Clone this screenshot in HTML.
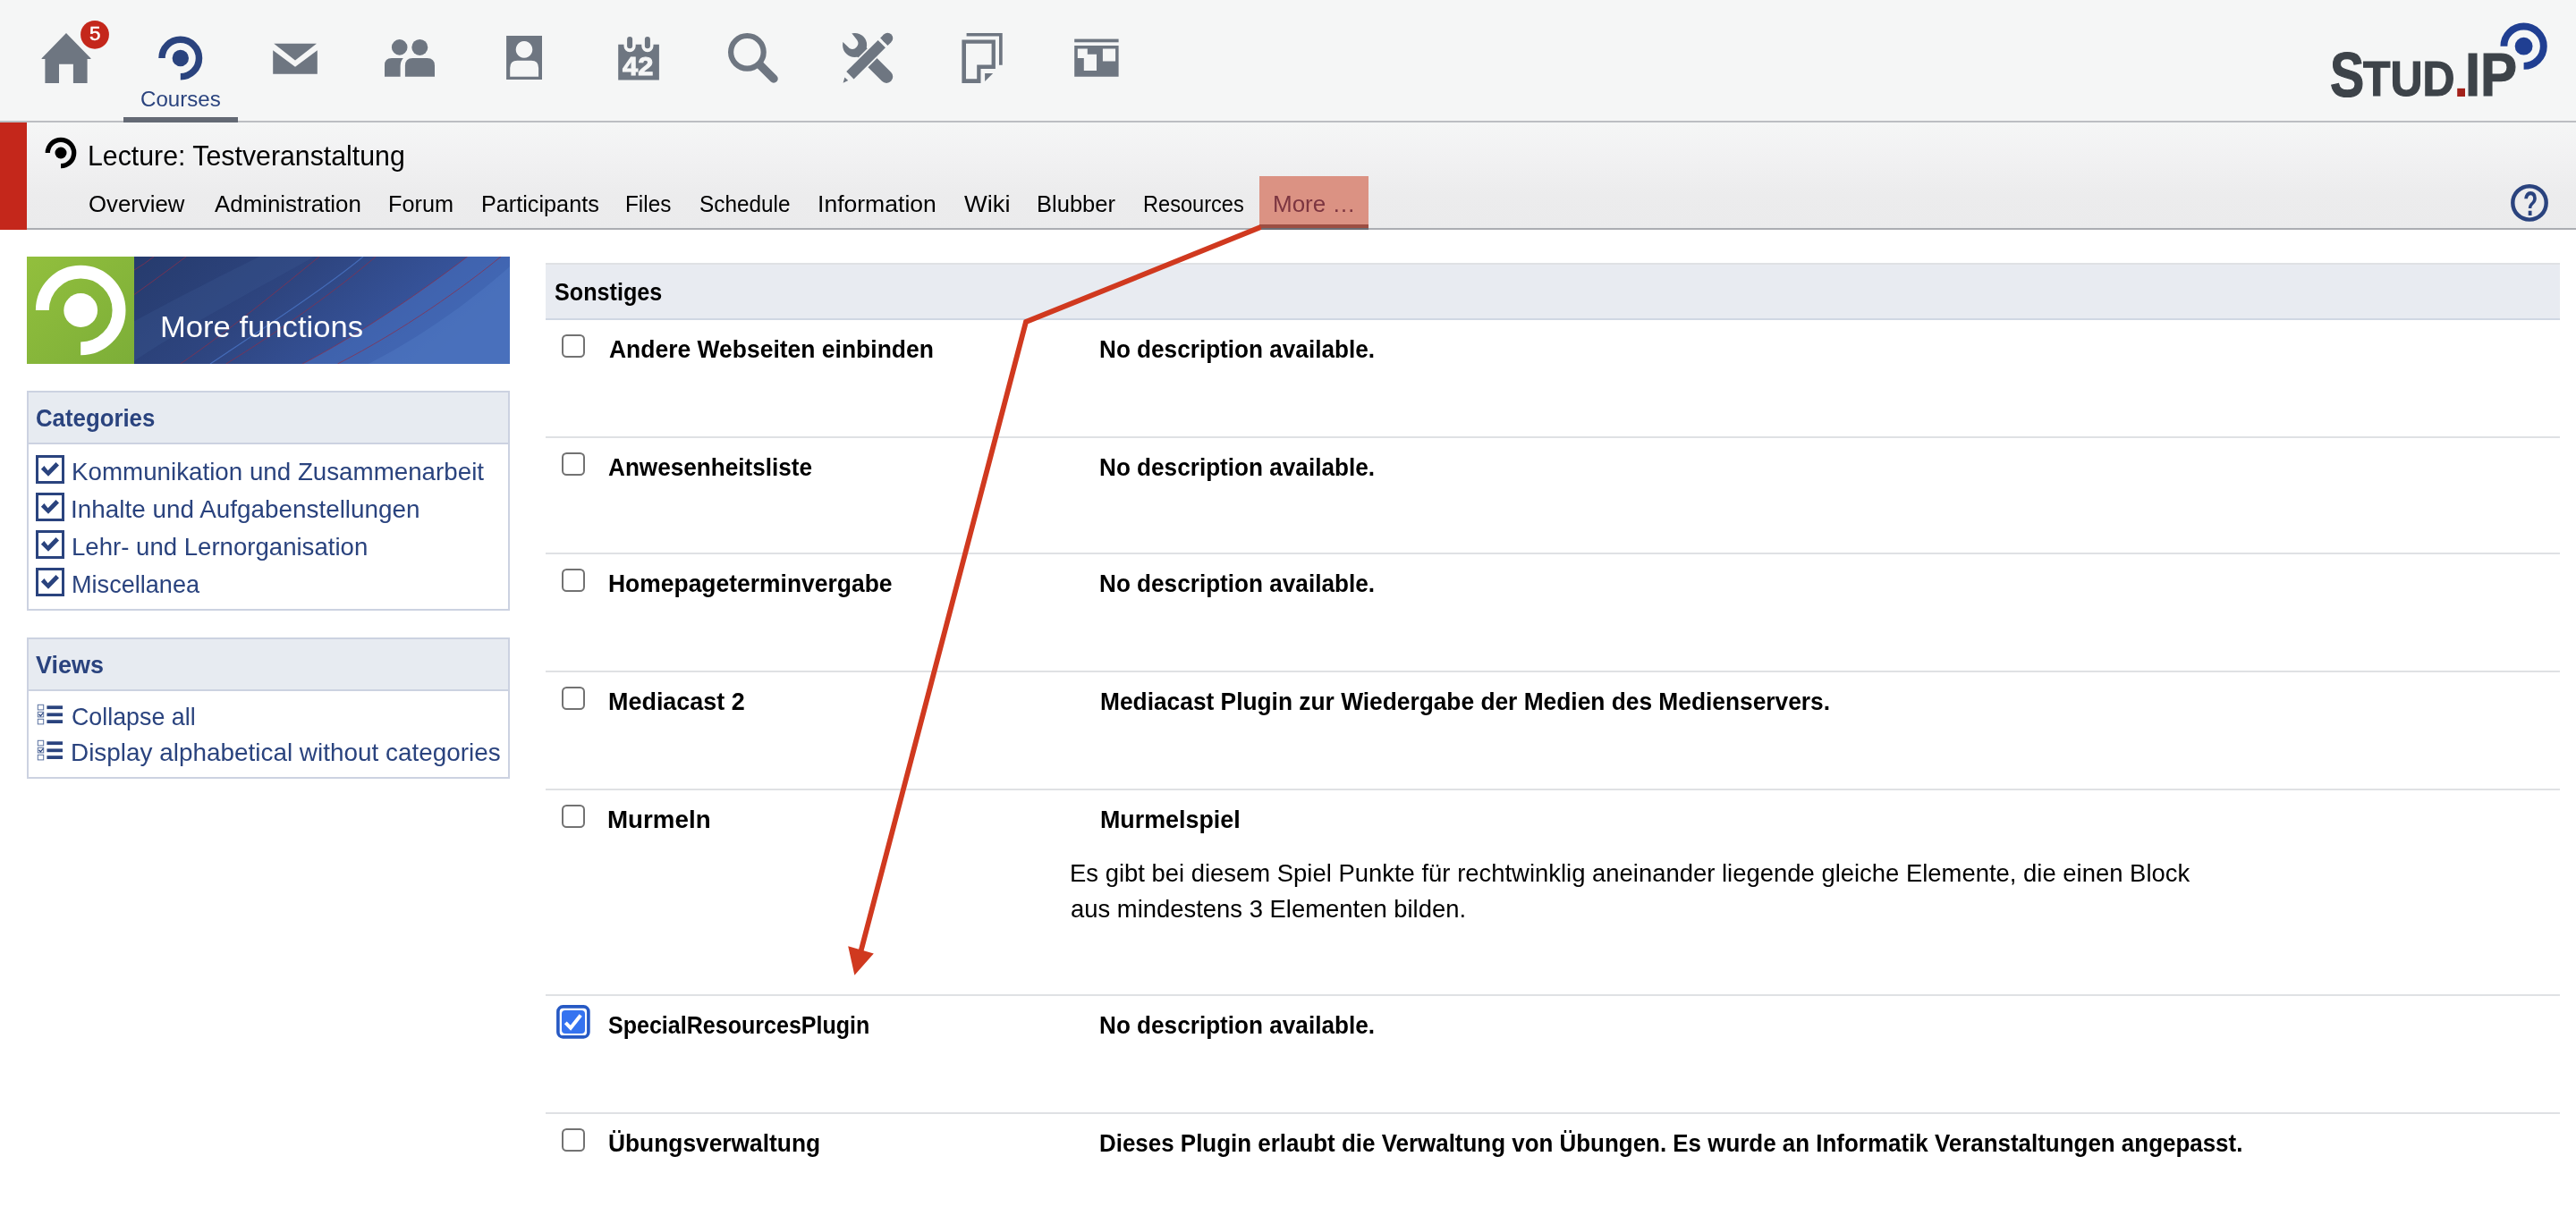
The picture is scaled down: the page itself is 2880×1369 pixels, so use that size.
<!DOCTYPE html>
<html lang="en">
<head>
<meta charset="utf-8">
<title>More functions - Lecture: Testveranstaltung - Stud.IP</title>
<style>
html,body{margin:0;padding:0;}
body{width:2880px;height:1369px;position:relative;overflow:hidden;background:#fff;
  font-family:"Liberation Sans",sans-serif;}
.a{position:absolute;display:block;}
.t{position:absolute;display:inline-block;white-space:nowrap;transform-origin:0 0;margin:0;padding:0;font-weight:400;font-style:normal;text-decoration:none;}
#topbar{left:0;top:0;width:2880px;height:135px;background:#f5f6f6;}
#topline{left:0;top:135px;width:2880px;height:2px;background:#bcbec2;}
#navactive{left:138px;top:131px;width:128px;height:6px;background:#646a75;}
#bar2{left:0;top:137px;width:2880px;height:118px;background:linear-gradient(#f5f6f6 0%,#f1f1f2 35%,#ececed 68%,#ebebec 100%);}
#bar2line{left:0;top:255px;width:2880px;height:2px;background:#abadb2;}
#redstrip{left:0;top:137px;width:30px;height:120px;background:#c4271b;}
#moretab{left:1408px;top:197px;width:122px;height:54px;background:#db9283;}
#moretabline{left:1408px;top:251px;width:122px;height:4px;background:#9c4e42;}
#moretabline2{left:1408px;top:255px;width:122px;height:2px;background:#6b6d75;}
svg{position:absolute;overflow:visible;}
/* sidebar */
#banner{left:30px;top:287px;width:540px;height:120px;background:#2d447f;}
.widget{box-sizing:border-box;border:2px solid #ccd2e1;background:#fff;}
.whead{box-sizing:border-box;left:0;top:0;width:100%;border-bottom:2px solid #ccd2e1;background:#e7ebf1;}
.cb{box-sizing:border-box;width:32px;height:32px;border:4px solid #2a437e;background:#fff;}
/* table */
#thead{left:610px;top:294px;width:2252px;height:62px;background:#e8ebf1;box-sizing:border-box;border-top:2px solid #dfe1e4;}
#theadline{left:610px;top:356px;width:2252px;height:2px;background:#d0d7e3;}
.sep{left:610px;width:2252px;height:2px;background:#dfe1e4;}
.chk{box-sizing:border-box;left:628px;width:26px;height:26px;border:2px solid #727272;border-radius:5.5px;background:#fff;}
#texts{position:absolute;left:0;top:0;width:2880px;height:1369px;will-change:transform;}

</style>
</head>
<body>
<div class="a" id="topbar"></div>
<div class="a" id="topline"></div>
<div class="a" id="navactive"></div>
<div class="a" id="bar2"></div>
<div class="a" id="bar2line"></div>
<div class="a" id="redstrip"></div>
<div class="a" id="moretab"></div>
<div class="a" id="moretabline"></div>
<div class="a" id="moretabline2"></div>

<!-- ICONS -->
<svg id="icons" width="2880" height="270" style="left:0;top:0" viewBox="0 0 2880 270">
  <g fill="#6e7681">
    <!-- home -->
    <path d="M74 37.1 L101.5 65.3 L101.5 66.1 L97.6 66.1 L97.6 93 L81.9 93 L81.9 71.7 L66 71.7 L66 93 L50.4 93 L50.4 66.1 L46.6 66.1 L46.6 65.3 Z"/>
    <!-- mail -->
    <path d="M306.2 48.8 L354 48.8 L330 67.6 Z"/>
    <path d="M305.2 56.2 L330 74.8 L354.8 56.2 L354.8 82.7 L305.2 82.7 Z"/>
    <!-- people -->
    <circle cx="446.7" cy="52.9" r="8.8"/>
    <circle cx="469.3" cy="52.9" r="9"/>
    <path d="M430 85.8 L430 73 Q430 65 438 65 L450.8 65 Q447.6 68.5 447.6 74 L447.6 85.8 Z"/>
    <path d="M452.9 85.8 L452.9 73.5 Q452.9 65 461.4 65 L477.5 65 Q486 65 486 73.5 L486 85.8 Z"/>
    <!-- profile -->
    <path fill-rule="evenodd" d="M566.1 39.9 H606 V88.9 H566.1 Z M586 46.1 a9.3 9.3 0 1 0 0.01 0 Z M570.2 85.8 V76 Q570.2 67.8 578.4 67.8 H594 Q602.1 67.8 602.1 76 V85.8 Z"/>
    <!-- calendar -->
    <path fill-rule="evenodd" d="M691.2 49.8 H697.5 V51.6 a6.6 6.6 0 0 0 13.2 0 V49.8 H717.3 V51.6 a6.6 6.6 0 0 0 13.2 0 V49.8 H736.9 V89.6 H691.2 Z"/>
    <rect x="701.1" y="40.9" width="6" height="13.4" rx="3"/>
    <rect x="720.9" y="40.9" width="6" height="13.4" rx="3"/>
    <!-- search -->
    <circle cx="835.4" cy="58.3" r="18.3" fill="none" stroke="#6e7681" stroke-width="6.2"/>
    <path d="M850 73 L865 88" fill="none" stroke="#6e7681" stroke-width="9.5" stroke-linecap="round"/>
  </g>
  <!-- tools -->
  <g id="tools">
    <path d="M955.6 50.4 L991.1 85.8" fill="none" stroke="#6e7681" stroke-width="14.3" stroke-linecap="round"/>
    <circle cx="955.6" cy="50.4" r="13.5" fill="#6e7681"/>
    <path d="M952.1 37.1 L958.2 44.8 A6.4 6.4 0 0 1 949.7 53.9 L942.4 47.1 L936 46 L938 32 L951 30 Z" fill="#f5f6f6"/>
    <path d="M944 90.7 L996 38.9" fill="none" stroke="#f5f6f6" stroke-width="15.4"/>
    <path d="M950.4 84.3 L985.8 49.1" fill="none" stroke="#6e7681" stroke-width="11.8"/>
    <path d="M988.3 46.7 L992.35 42.7" fill="none" stroke="#6e7681" stroke-width="11.8"/>
    <circle cx="992.35" cy="42.7" r="5.9" fill="#6e7681"/>
    <path d="M944.4 86.5 L948.2 90.1 L942.6 92.7 Z" fill="#6e7681"/>
  </g>
  <g fill="#6e7681">
    <!-- files -->
    <path d="M1080.6 37 H1120.7 V72.8 H1117 V40.6 H1080.6 Z"/>
    <path fill-rule="evenodd" d="M1075.4 44.5 H1112.9 V77.1 H1096.5 V92.9 H1075.4 Z M1080 48.8 V88.2 H1092.2 V72.5 H1108.6 V48.8 Z"/>
    <path d="M1101.1 82.1 H1110.2 L1101.1 91 Z"/>
    <!-- layout -->
    <rect x="1201.2" y="43.6" width="49.4" height="3.7"/>
    <path fill-rule="evenodd" d="M1201.2 51 H1250.6 V85.8 H1201.2 Z M1204.8 54.5 V65 H1211.8 V79 H1226 V60.7 H1215.8 V54.5 Z M1232.9 54.5 H1247.1 V68.4 H1232.9 Z"/>
  </g>
  <!-- badge -->
  <circle cx="106" cy="38.8" r="15.9" fill="#c4271b"/>
  <!-- courses icon -->
  <path d="M181 65 A20.75 20.75 0 1 1 201.8 85.75" fill="none" stroke="#2a437e" stroke-width="7.5"/>
  <circle cx="201.8" cy="65" r="9.2" fill="#2a437e"/>
  <!-- title icon -->
  <path d="M53.3 171 A14.7 14.7 0 1 1 68 185.7" fill="none" stroke="#000" stroke-width="5.3"/>
  <circle cx="68" cy="171" r="6.5" fill="#000"/>
  <!-- logo circle -->
  <path d="M2799.4 51.7 A22.2 22.2 0 1 1 2821.6 73.9" fill="none" stroke="#203f92" stroke-width="7.9"/>
  <circle cx="2821.6" cy="51.7" r="9.9" fill="#203f92"/>
  <!-- help -->
  <circle cx="2828" cy="226.9" r="18.7" fill="none" stroke="#2a437e" stroke-width="4.4"/>
</svg>

<!-- SIDEBAR -->
<div class="a" id="banner">
  <svg width="540" height="120" viewBox="0 0 540 120" style="left:0;top:0">
    <defs>
      <linearGradient id="bg1" x1="0" y1="0" x2="1" y2="0.35">
        <stop offset="0" stop-color="#263b6d"/>
        <stop offset="0.45" stop-color="#2e4580"/>
        <stop offset="0.8" stop-color="#36539a"/>
        <stop offset="1" stop-color="#3b5ca6"/>
      </linearGradient>
      <linearGradient id="gg" x1="0" y1="0" x2="1" y2="1">
        <stop offset="0" stop-color="#92bf3d"/>
        <stop offset="1" stop-color="#7cae38"/>
      </linearGradient>
      <clipPath id="bclip"><rect x="120" y="0" width="420" height="120"/></clipPath>
    </defs>
    <rect x="120" y="0" width="420" height="120" fill="url(#bg1)"/>
    <g clip-path="url(#bclip)"><g transform="translate(120 0)">
      <path d="M188 120 C 250 88, 320 40, 372.6 0 L 480 0 L 480 120 Z" fill="#4a74c4" opacity="0.5"/>
      <path d="M262 120 C 330 85, 392 38, 432 0 L 480 0 L 480 120 Z" fill="#5a86cc" opacity="0.3"/>
      <path d="M-5 75 C 60 40, 110 15, 150 -5 L 210 -5 C 150 30, 70 70, -5 120 Z" fill="#3a5590" opacity="0.35"/>
      <g fill="none" stroke="#8c2f4a" stroke-width="1" opacity="0.75">
        <path d="M0 15 Q 12 8 22 0"/>
        <path d="M0 42.5 Q 33 19 58 0"/>
        <path d="M51.5 120 C 110 80, 170 30, 207 0"/>
        <path d="M102.7 120 C 160 85, 230 35, 270 0"/>
        <path d="M188 120 C 250 88, 320 40, 372.6 0"/>
        <path d="M227.4 120 C 300 83, 370 33, 410 0"/>
      </g>
      <path d="M85 120 C 160 70, 220 30, 256 0" fill="none" stroke="#4a74c4" stroke-width="1.2" opacity="0.8"/>
    </g></g>
    <rect x="0" y="0" width="120" height="120" fill="url(#gg)"/>
    <path d="M17.35 60 A42.85 42.85 0 1 1 60.2 102.85" fill="none" stroke="#fff" stroke-width="14.9"/>
    <circle cx="60.2" cy="60" r="18.9" fill="#fff"/>
  </svg>
</div>

<div class="a widget" id="w_cat" style="left:30px;top:437px;width:540px;height:246px;">
  <div class="a whead" style="height:58px;"></div>
</div>
<div class="a widget" id="w_views" style="left:30px;top:713px;width:540px;height:158px;">
  <div class="a whead" style="height:58px;"></div>
</div>
<svg id="sideicons" width="600" height="900" viewBox="0 0 600 900" style="left:0;top:0">
  <g id="cbs">
    <g id="cb0"><rect x="41.5" y="510.5" width="29" height="29" fill="#fff" stroke="#2a437e" stroke-width="3"/><path d="M49.4 521 L45.9 524.7 L54 532.8 L66 520.6 L62.5 517.1 L53.6 526.2 Z" fill="#2a437e"/></g>
    <use href="#cb0" y="42"/><use href="#cb0" y="84"/><use href="#cb0" y="126"/>
  </g>
  <g id="vi0" fill="#2a437e">
    <rect x="52.4" y="789.3" width="17.6" height="3.8"/><rect x="52.4" y="797.4" width="17.6" height="3.8"/><rect x="52.4" y="805.2" width="17.6" height="3.8"/>
    <g fill="none" stroke="#5a72a0" stroke-width="1"><rect x="42.3" y="788.3" width="6.4" height="5.6"/><rect x="42.3" y="796.3" width="6.4" height="5.6"/><rect x="42.3" y="804.3" width="6.4" height="5.6"/></g>
    <path d="M43.5 798.8 L45.3 800.8 L48.3 797.3" fill="none" stroke="#2a437e" stroke-width="1.3"/>
  </g>
  <use href="#vi0" y="40"/>
</svg>

<!-- TABLE -->
<div class="a" id="thead"></div>
<div class="a" id="theadline"></div>
<div class="a sep" style="top:488px"></div>
<div class="a sep" style="top:618px"></div>
<div class="a sep" style="top:750px"></div>
<div class="a sep" style="top:882px"></div>
<div class="a sep" style="top:1112px"></div>
<div class="a sep" style="top:1244px"></div>
<div class="a chk" style="top:374px"></div>
<div class="a chk" style="top:506px"></div>
<div class="a chk" style="top:636px"></div>
<div class="a chk" style="top:768px"></div>
<div class="a chk" style="top:900px"></div>
<div class="a chk" style="top:1262px"></div>
<svg id="chk5" width="40" height="40" viewBox="0 0 40 40" style="left:622px;top:1124px">
  <rect x="1.9" y="1.9" width="34" height="34" rx="5.5" fill="#fff" stroke="#2659c4" stroke-width="3.6"/>
  <rect x="6" y="6" width="26" height="26" rx="4" fill="#3573f0"/>
  <path d="M10.3 19.9 L16 25.8 L27.2 11.6" fill="none" stroke="#fff" stroke-width="4"/>
</svg>

<!-- ARROW -->
<svg id="arrow" width="2880" height="1369" viewBox="0 0 2880 1369" style="left:0;top:0;pointer-events:none">
  <path d="M1409.5 254 L1147 360 L962.6 1063.5" fill="none" stroke="#d0391f" stroke-width="5.8" stroke-linejoin="miter"/>
  <path d="M948.2 1058.2 L976.8 1066.4 L955.4 1090.7 Z" fill="#d0391f"/>
</svg>

<div id="texts">
<nav id="g_mainnav" aria-label="Main navigation">
  <span class="t" id="badge" style="left:99.79px;top:27.00px;font-size:21.8px;line-height:21.8px;color:#fff;transform:scaleX(1.0270);-webkit-text-stroke:0.5px #fff;">5</span>
  <a class="t" id="courses" style="left:157.37px;top:99.00px;font-size:24.7px;line-height:24.7px;color:#2a437e;transform:scaleX(0.9770);">Courses</a>
  <span class="t" id="cal42" style="left:695.96px;top:59.00px;font-size:29.5px;line-height:29.5px;color:#f5f6f6;transform:scaleX(1.0445);font-weight:700;-webkit-text-stroke:1px #f5f6f6;">42</span>
</nav>
<div id="g_logo" aria-label="Stud.IP">
  <span class="t" id="lgS" style="left:2605.13px;top:50.00px;font-size:69.5px;line-height:69.5px;color:#3d4349;transform:scaleX(0.8248);font-weight:700;-webkit-text-stroke:1.2px #3d4349;">S</span>
  <span class="t" id="lgT" style="left:2642.05px;top:61.00px;font-size:54.7px;line-height:54.7px;color:#3d4349;transform:scaleX(0.9111);font-weight:700;-webkit-text-stroke:1.2px #3d4349;">TUD</span>
  <span class="t" id="lgdot" style="left:2742.62px;top:56.00px;font-size:62px;line-height:62px;color:#a3211a;transform:scaleX(1.0056);font-weight:700;">.</span>
  <span class="t" id="lgIP" style="left:2755.94px;top:49.00px;font-size:68px;line-height:68px;color:#3d4349;transform:scaleX(0.9056);font-weight:700;-webkit-text-stroke:1.2px #3d4349;">IP</span>
</div>
<div id="g_coursehead">
  <h1 class="t" id="title" style="left:97.96px;top:159.00px;font-size:30.5px;line-height:30.5px;color:#000;transform:scaleX(0.9934);">Lecture: Testveranstaltung</h1>
</div>
<nav id="g_tabs" aria-label="Course navigation">
  <a class="t" id="tab0" style="left:99.10px;top:216.00px;font-size:25.2px;line-height:25.2px;color:#000;transform:scaleX(1.0221);">Overview</a>
  <a class="t" id="tab1" style="left:239.91px;top:216.00px;font-size:25.2px;line-height:25.2px;color:#000;transform:scaleX(1.0269);">Administration</a>
  <a class="t" id="tab2" style="left:434.11px;top:216.00px;font-size:25.2px;line-height:25.2px;color:#000;transform:scaleX(1.0033);">Forum</a>
  <a class="t" id="tab3" style="left:537.83px;top:216.00px;font-size:25.2px;line-height:25.2px;color:#000;transform:scaleX(1.0015);">Participants</a>
  <a class="t" id="tab4" style="left:698.95px;top:216.00px;font-size:25.2px;line-height:25.2px;color:#000;transform:scaleX(0.9661);">Files</a>
  <a class="t" id="tab5" style="left:782.41px;top:216.00px;font-size:25.2px;line-height:25.2px;color:#000;transform:scaleX(0.9657);">Schedule</a>
  <a class="t" id="tab6" style="left:913.78px;top:216.00px;font-size:25.2px;line-height:25.2px;color:#000;transform:scaleX(1.0540);">Information</a>
  <a class="t" id="tab7" style="left:1077.83px;top:216.00px;font-size:25.2px;line-height:25.2px;color:#000;transform:scaleX(1.0821);">Wiki</a>
  <a class="t" id="tab8" style="left:1158.88px;top:216.00px;font-size:25.2px;line-height:25.2px;color:#000;transform:scaleX(1.0133);">Blubber</a>
  <a class="t" id="tab9" style="left:1278.15px;top:216.00px;font-size:25.2px;line-height:25.2px;color:#000;transform:scaleX(0.9369);">Resources</a>
  <a class="t" id="tabmore" style="left:1423.01px;top:216.00px;font-size:25.2px;line-height:25.2px;color:#7c3540;transform:scaleX(1.0323);">More …</a>
  <span class="t" id="helpq" style="left:2820.85px;top:208.00px;font-size:39.5px;line-height:39.5px;color:#2a437e;transform:scaleX(0.6781);font-weight:700;">?</span>
</nav>
<aside id="g_sidebar">
  <div class="t" id="bannertxt" style="left:178.69px;top:348.00px;font-size:34px;line-height:34px;color:#fff;transform:scaleX(1.0182);">More functions</div>
  <h2 class="t" id="h_cat" style="left:40.00px;top:454.00px;font-size:28px;line-height:28px;color:#2a437e;transform:scaleX(0.9210);font-weight:700;">Categories</h2>
  <label class="t" id="cat0" style="left:79.73px;top:514.00px;font-size:28px;line-height:28px;color:#2a437e;transform:scaleX(0.9907);">Kommunikation und Zusammenarbeit</label>
  <label class="t" id="cat1" style="left:79.31px;top:556.00px;font-size:28px;line-height:28px;color:#2a437e;transform:scaleX(0.9955);">Inhalte und Aufgabenstellungen</label>
  <label class="t" id="cat2" style="left:80.00px;top:598.00px;font-size:28px;line-height:28px;color:#2a437e;transform:scaleX(0.9851);">Lehr- und Lernorganisation</label>
  <label class="t" id="cat3" style="left:80.06px;top:640.00px;font-size:28px;line-height:28px;color:#2a437e;transform:scaleX(0.9674);">Miscellanea</label>
  <h2 class="t" id="h_views" style="left:39.82px;top:730.00px;font-size:28px;line-height:28px;color:#2a437e;transform:scaleX(0.9630);font-weight:700;">Views</h2>
  <a class="t" id="view0" style="left:79.95px;top:788.00px;font-size:28px;line-height:28px;color:#2a437e;transform:scaleX(0.9577);">Collapse all</a>
  <a class="t" id="view1" style="left:78.79px;top:828.00px;font-size:28px;line-height:28px;color:#2a437e;transform:scaleX(0.9963);">Display alphabetical without categories</a>
</aside>
<main id="g_content">
  <h2 class="t" id="h_tab" style="left:619.78px;top:313.00px;font-size:28px;line-height:28px;color:#000;transform:scaleX(0.8989);font-weight:700;">Sonstiges</h2>
  <label class="t" id="rn0" style="left:680.53px;top:377.00px;font-size:28px;line-height:28px;color:#000;transform:scaleX(0.9456);font-weight:700;">Andere Webseiten einbinden</label>
  <strong class="t" id="rd0" style="left:1229.34px;top:377.00px;font-size:28px;line-height:28px;color:#000;transform:scaleX(0.9337);font-weight:700;">No description available.</strong>
  <label class="t" id="rn1" style="left:680.46px;top:509.00px;font-size:28px;line-height:28px;color:#000;transform:scaleX(0.9335);font-weight:700;">Anwesenheitsliste</label>
  <strong class="t" id="rd1" style="left:1229.34px;top:509.00px;font-size:28px;line-height:28px;color:#000;transform:scaleX(0.9337);font-weight:700;">No description available.</strong>
  <label class="t" id="rn2" style="left:679.77px;top:639.00px;font-size:28px;line-height:28px;color:#000;transform:scaleX(0.9447);font-weight:700;">Homepageterminvergabe</label>
  <strong class="t" id="rd2" style="left:1229.34px;top:639.00px;font-size:28px;line-height:28px;color:#000;transform:scaleX(0.9337);font-weight:700;">No description available.</strong>
  <label class="t" id="rn3" style="left:679.63px;top:771.00px;font-size:28px;line-height:28px;color:#000;transform:scaleX(0.9622);font-weight:700;">Mediacast 2</label>
  <strong class="t" id="rd3" style="left:1230.07px;top:771.00px;font-size:28px;line-height:28px;color:#000;transform:scaleX(0.9401);font-weight:700;">Mediacast Plugin zur Wiedergabe der Medien des Medienservers.</strong>
  <label class="t" id="rn4" style="left:679.24px;top:903.00px;font-size:28px;line-height:28px;color:#000;transform:scaleX(0.9905);font-weight:700;">Murmeln</label>
  <strong class="t" id="rd4" style="left:1230.05px;top:903.00px;font-size:28px;line-height:28px;color:#000;transform:scaleX(0.9587);font-weight:700;">Murmelspiel</strong>
  <span class="t" id="p0" style="left:1196.24px;top:963.00px;font-size:28px;line-height:28px;color:#000;transform:scaleX(0.9799);">Es gibt bei diesem Spiel Punkte für rechtwinklig aneinander liegende gleiche Elemente, die einen Block</span>
  <span class="t" id="p1" style="left:1197.13px;top:1003.00px;font-size:28px;line-height:28px;color:#000;transform:scaleX(0.9793);">aus mindestens 3 Elementen bilden.</span>
  <label class="t" id="rn5" style="left:680.27px;top:1133.00px;font-size:28px;line-height:28px;color:#000;transform:scaleX(0.8946);font-weight:700;">SpecialResourcesPlugin</label>
  <strong class="t" id="rd5" style="left:1229.34px;top:1133.00px;font-size:28px;line-height:28px;color:#000;transform:scaleX(0.9337);font-weight:700;">No description available.</strong>
  <label class="t" id="rn6" style="left:679.90px;top:1265.00px;font-size:28px;line-height:28px;color:#000;transform:scaleX(0.9409);font-weight:700;">Übungsverwaltung</label>
  <strong class="t" id="rd6" style="left:1229.42px;top:1265.00px;font-size:28px;line-height:28px;color:#000;transform:scaleX(0.9263);font-weight:700;">Dieses Plugin erlaubt die Verwaltung von Übungen. Es wurde an Informatik Veranstaltungen angepasst.</strong>
</main>
</div>
</body>
</html>
